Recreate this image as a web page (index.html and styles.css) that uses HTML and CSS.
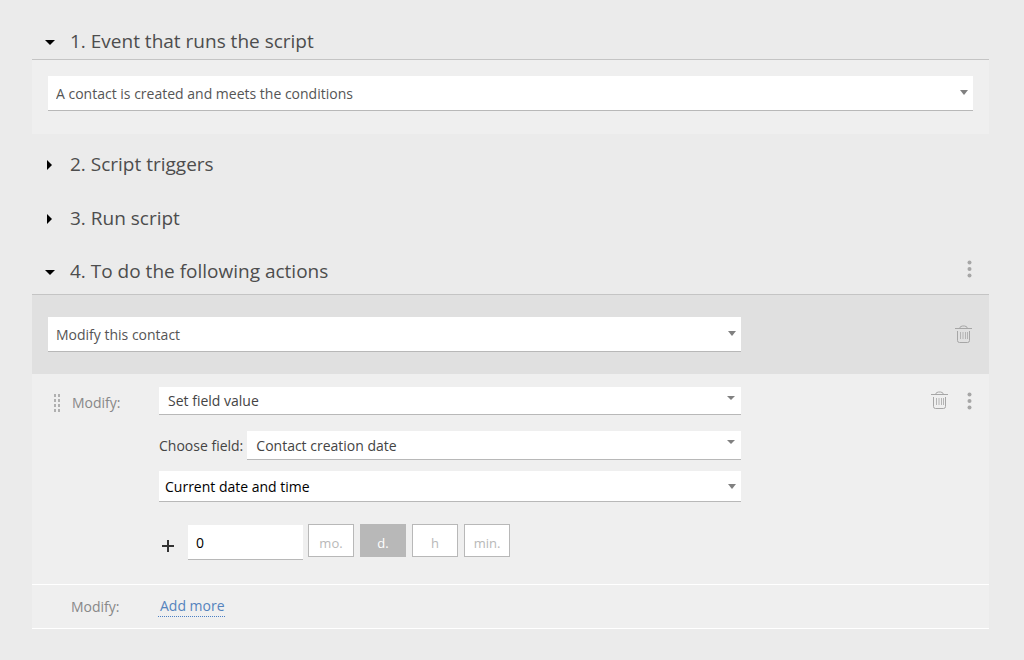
FILE: index.html
```html
<!DOCTYPE html>
<html lang="en">
  <head>
    <meta charset="UTF-8" />
    <meta name="viewport" content="width=device-width, initial-scale=1.0" />
    <title>Script settings</title>
    <link rel="stylesheet" href="styles.css">
  </head>
  <body>
    <svg class="sprite" aria-hidden="true">
      <symbol id="trash" viewBox="0 0 17 19">
        <path d="M0 3.5h17M4.5 3.5q.5-2.500 3-2.500h2q2.500 0 3 2.500M2.500 6v9.500q0 2 2 2h8q2 0 2-2V6" />
        <path class="bars" d="M5.500 7v7M8 7v7M10.500 7v7M12.500 7v7" />
      </symbol>
      <symbol id="dots" viewBox="0 0 5 18">
        <circle cx="2.500" cy="2.500" r="2" />
        <circle cx="2.500" cy="9" r="2" />
        <circle cx="2.500" cy="15.500" r="2" />
      </symbol>
    </svg>

    <main>
      <section>
        <h2><button class="toggle open" aria-expanded="true">1. Event that runs the script</button></h2>
        <div class="panel event">
          <div class="select">
            <select aria-label="Event">
              <option>A contact is created and meets the conditions</option>
            </select>
          </div>
        </div>
      </section>

      <section>
        <h2><button class="toggle" aria-expanded="false">2. Script triggers</button></h2>
      </section>

      <section>
        <h2><button class="toggle" aria-expanded="false">3. Run script</button></h2>
      </section>

      <section class="actions">
        <h2>
          <button class="toggle open" aria-expanded="true">4. To do the following actions</button>
          <button class="icon" aria-label="More"><svg class="dots"><use href="#dots" /></svg></button>
        </h2>
        <div class="panel">
          <div class="action-head">
            <div class="select">
              <select aria-label="Action">
                <option>Modify this contact</option>
              </select>
            </div>
            <button class="icon" aria-label="Delete action"><svg class="trash"><use href="#trash" /></svg></button>
          </div>

          <div class="row">
            <svg class="grip" viewBox="0 0 7 18">
              <path d="M1 0v18M5 0v18" />
            </svg>
            <label class="name" for="modify">Modify:</label>
            <div class="fields">
              <div class="select small">
                <select id="modify">
                  <option>Set field value</option>
                </select>
              </div>
              <div class="choose">
                <label for="field">Choose field:</label>
                <div class="select small">
                  <select id="field">
                    <option>Contact creation date</option>
                  </select>
                </div>
              </div>
              <div class="select date">
                <select aria-label="Value">
                  <option>Current date and time</option>
                </select>
              </div>
              <div class="offset">
                <svg class="plus" viewBox="0 0 12 12"><path d="M0 6h12M6 0v12" /></svg>
                <input type="text" value="0" aria-label="Offset">
                <div class="units">
                  <button>mo.</button>
                  <button class="active">d.</button>
                  <button>h</button>
                  <button>min.</button>
                </div>
              </div>
            </div>
            <div class="tools">
              <button class="icon" aria-label="Delete"><svg class="trash"><use href="#trash" /></svg></button>
              <button class="icon" aria-label="More"><svg class="dots"><use href="#dots" /></svg></button>
            </div>
          </div>

          <div class="row more">
            <span class="name">Modify:</span>
            <a href="#">Add more</a>
          </div>
        </div>
      </section>
    </main>
  </body>
</html>
```
FILE: styles.css
```css
* {
  box-sizing: border-box;
}

body {
  margin: 0;
  background: #ebebeb;
  color: #444;
  font-family: "Open Sans", "Noto Sans", sans-serif;
  font-size: 14px;
  line-height: 20px;
}

main {
  padding: 24px 35px 31px 32px;
}

button,
select,
input {
  font: inherit;
  color: inherit;
  margin: 0;
  border: 0;
  border-radius: 0;
  background: none;
}

button {
  padding: 0;
  cursor: pointer;
}

.sprite {
  display: none;
}

/* section titles */
h2 {
  display: flex;
  align-items: center;
  justify-content: space-between;
  height: 35px;
  margin: 0 0 19px;
  padding: 0 17px 2px 0;
  font-size: 19px;
  font-weight: 400;
  color: #4d4d4d;
}

.toggle {
  display: flex;
  align-items: center;
  padding-left: 15px;
}

.toggle::before {
  content: "";
  width: 0;
  margin: 3px 18px 0 0;
  border: 5px solid transparent;
  border-left-color: #000;
  border-right: 0;
}

.toggle.open::before {
  margin: 3px 15px 0 -2px;
  border: 5px solid transparent;
  border-top-color: #000;
  border-bottom: 0;
}

.panel {
  border-top: 1px solid #c4c4c4;
  background: #efefef;
}

h2:has(+ .panel) {
  margin-bottom: 0;
}

.event {
  padding: 16px 16px 23px;
  margin-bottom: 13px;
}

.actions h2 {
  align-items: flex-start;
  height: 39px;
}

.actions h2 .toggle {
  margin-top: 6px;
}

.actions h2 .icon {
  margin-top: 5px;
}

/* drop-downs */
.select {
  position: relative;
}

.select::after {
  content: "";
  position: absolute;
  top: 14px;
  right: 5px;
  border: 4px solid transparent;
  border-top: 5px solid #808080;
  border-bottom: 0;
  pointer-events: none;
}

select {
  display: block;
  appearance: none;
  width: 100%;
  height: 35px;
  padding: 1px 20px 0 8px;
  border-bottom: 1px solid #b8b8b8;
  background: #fff;
  color: #555;
}

.small select {
  height: 28px;
  padding-left: 9px;
  color: #444;
}

.small::after {
  top: 9px;
  right: 6px;
  border-top-width: 4px;
}

.date select {
  height: 31px;
  padding-left: 6px;
  color: #000;
}

.date::after {
  top: 13px;
}

/* icons */
.icon svg {
  display: block;
}

.trash {
  width: 17px;
  height: 19px;
  fill: none;
  stroke: #a6a6a6;
}

.bars {
  stroke: #b4b4b4;
}

.dots {
  width: 5px;
  height: 18px;
  fill: #a6a6a6;
}

.grip {
  width: 7px;
  height: 18px;
  margin: 20px 11px 0 22px;
  fill: none;
  stroke: #b0b0b0;
  stroke-width: 2;
  stroke-dasharray: 3 2;
}

/* actions */
.action-head {
  display: flex;
  align-items: center;
  justify-content: space-between;
  height: 79px;
  padding: 0 17px 0 16px;
  background: #e0e0e0;
}

.action-head .select {
  width: 75%;
}

.row {
  display: flex;
  align-items: flex-start;
  border-bottom: 1px solid #fff;
}

.name {
  width: 87px;
  margin-top: 19px;
  color: #888;
}

.fields {
  flex: 1;
  padding: 13px 0 24px;
}

.choose {
  display: flex;
  align-items: center;
  gap: 4px;
  margin: 16px 0 11px;
}

.choose .select {
  flex: 1;
}

.choose select {
  height: 29px;
}

.offset {
  display: flex;
  align-items: flex-start;
  margin-top: 22px;
}

.plus {
  width: 12px;
  height: 12px;
  margin: 16px 14px 0 3px;
  fill: none;
  stroke: #333;
  stroke-width: 2;
}

.offset input {
  width: 115px;
  height: 35px;
  margin-top: 1px;
  padding: 0 8px;
  border-bottom: 1px solid #b8b8b8;
  background: #fff;
  color: #000;
}

.units {
  display: flex;
  gap: 6px;
  margin-left: 5px;
}

.units button {
  width: 46px;
  height: 33px;
  padding-top: 5px;
  border: 1px solid #b8b8b8;
  background: #fff;
  color: #b8b8b8;
  font-size: 13px;
}

.units .active {
  background: #b8b8b8;
  color: #fff;
}

.tools {
  display: flex;
  justify-content: space-between;
  width: 248px;
  padding: 17px 17px 0 190px;
}

.more {
  align-items: center;
  height: 44px;
  padding-left: 39px;
}

.more .name {
  margin: 0;
}

.more a {
  padding-left: 2px;
  border-bottom: 1px dotted #4a7fc4;
  color: #5583bd;
  text-decoration: none;
}
```
